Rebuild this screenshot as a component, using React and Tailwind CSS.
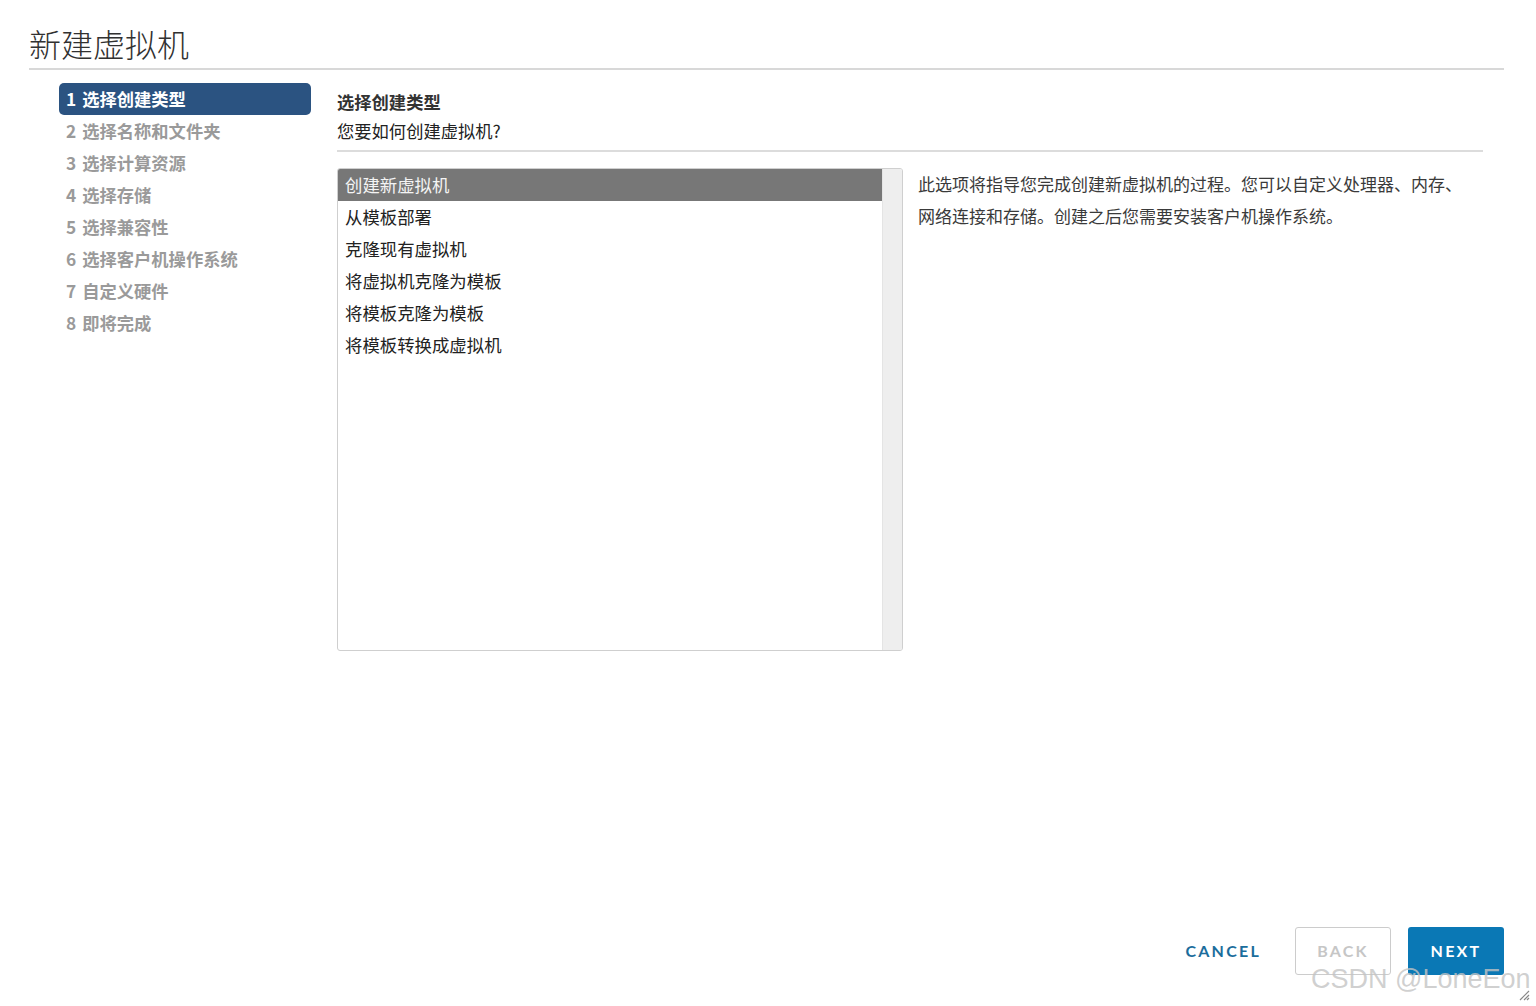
import React from 'react';

const steps = [
  ['1', '选择创建类型'],
  ['2', '选择名称和文件夹'],
  ['3', '选择计算资源'],
  ['4', '选择存储'],
  ['5', '选择兼容性'],
  ['6', '选择客户机操作系统'],
  ['7', '自定义硬件'],
  ['8', '即将完成'],
];

const options = [
  '创建新虚拟机',
  '从模板部署',
  '克隆现有虚拟机',
  '将虚拟机克隆为模板',
  '将模板克隆为模板',
  '将模板转换成虚拟机',
];

const cjk = { fontFamily: '"Microsoft YaHei", "Noto Sans CJK SC", "Noto Sans", sans-serif' };
const latin = { fontFamily: 'Lato, "Open Sans", "Noto Sans", sans-serif' };

export default function App() {
  return (
    <div className="relative w-[1536px] h-[1006px] bg-white overflow-hidden flex flex-col" style={cjk}>
      {/* Title */}
      <div className="pl-[29px] pr-[32px]">
        <h1 className="pt-[23px] pb-[5px] leading-[40px] text-[32px] font-light text-[#313131] border-b-2 border-[#d8d8d8]">
          新建虚拟机
        </h1>
      </div>

      {/* Body */}
      <div className="flex pl-[59px] pr-[53px] mt-[13px]">
        {/* Step nav */}
        <nav className="w-[252px] shrink-0 flex flex-col">
          {steps.map(([n, s], i) => (
            <div
              key={s}
              className={
                i === 0
                  ? 'h-[32px] leading-[32px] px-[7px] rounded-[5px] bg-[#2b5381] text-white text-[17.3px] font-bold flex gap-[6px]'
                  : 'h-[32px] leading-[32px] px-[7px] text-[#9a9a9a] text-[17.3px] font-bold flex gap-[6px]'
              }
            >
              <span>{n}</span>
              <span>{s}</span>
            </div>
          ))}
        </nav>

        {/* Content */}
        <div className="ml-[26px] flex-1">
          <div className="border-b-2 border-[#dcdcdc] pb-[7px]">
            <div className="mt-[7px] leading-[24px] text-[17.3px] font-bold text-[#333]">选择创建类型</div>
            <div className="mt-[5px] leading-[24px] text-[17.3px] text-[#222]">您要如何创建虚拟机?</div>
          </div>

          <div className="flex mt-[16px]">
            <div className="w-[566px] h-[483px] shrink-0 border border-[#cfcfcf] rounded-[3px] flex overflow-hidden">
              <ul className="flex-1 flex flex-col">
                {options.map((o, i) => (
                  <li
                    key={o}
                    className={
                      i === 0
                        ? 'h-[32px] leading-[32px] pl-[7px] bg-[#777777] text-[#f4f4f4] text-[17.4px]'
                        : 'h-[32px] leading-[32px] pl-[7px] text-[#222] text-[17.4px]'
                    }
                  >
                    {o}
                  </li>
                ))}
              </ul>
              <div className="w-[20px] bg-[#eeeeee] border-l border-[#e4e4e4]" />
            </div>

            <p className="ml-[15px] w-[552px] text-[17px] leading-[32px] text-[#3a3a3a]">
              此选项将指导您完成创建新虚拟机的过程。您可以自定义处理器、内存、网络连接和存储。创建之后您需要安装客户机操作系统。
            </p>
          </div>
        </div>
      </div>

      {/* Footer */}
      <div className="mt-auto flex items-center justify-end pr-[32px] pb-[31px]" style={latin}>
        <button className="h-[48px] px-[12px] text-[16px] font-bold tracking-[0.14em] text-[#1b6d9c]">
          CANCEL
        </button>
        <button className="ml-[22px] w-[96px] h-[48px] border border-[#cccccc] rounded-[3px] text-[16px] font-bold tracking-[0.14em] text-[#c6c6c6]">
          BACK
        </button>
        <button className="ml-[17px] w-[96px] h-[48px] rounded-[3px] bg-[#0a78b5] text-[16px] font-bold tracking-[0.14em] text-white">
          NEXT
        </button>
      </div>

      {/* Watermark */}
      <div
        className="absolute left-[1311px] top-[962px] text-[27px] leading-[34px] text-[#c4c4c4]/80 pointer-events-none"
        style={{ fontFamily: '"Liberation Sans", Arial, sans-serif' }}
      >
        CSDN @LoneEon
      </div>

      {/* Resize grip */}
      <svg className="absolute right-[6px] bottom-[5px]" width="12" height="12" viewBox="0 0 12 12">
        <path d="M11 2 L2 11 M11 6 L6 11 M11 9 L9 11" stroke="#888" strokeWidth="1.2" />
      </svg>
    </div>
  );
}
